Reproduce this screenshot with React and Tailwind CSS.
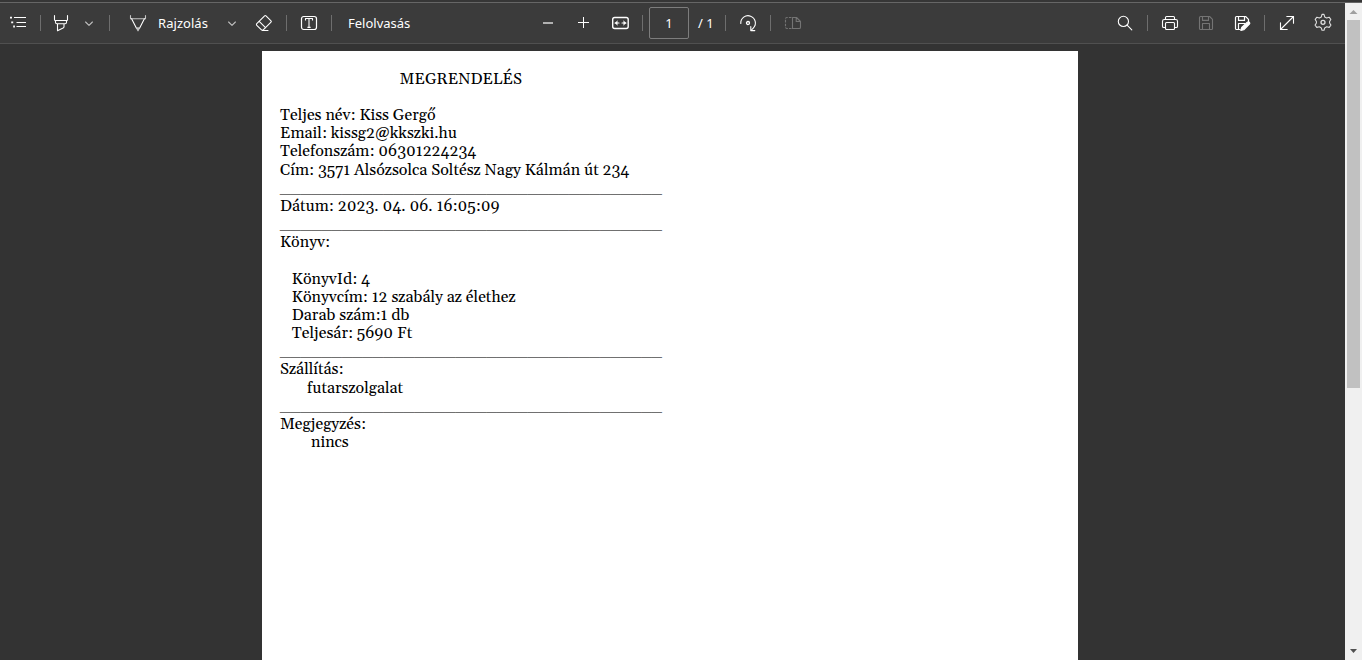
import React from 'react';

function Icon({ className = '', children }) {
  return (
    <svg
      viewBox="0 0 20 20"
      fill="none"
      stroke="currentColor"
      strokeWidth="1.1"
      strokeLinecap="round"
      strokeLinejoin="round"
      className={`h-5 w-5 shrink-0 ${className}`}
    >
      {children}
    </svg>
  );
}

function Divider({ className = '' }) {
  return <div className={`h-4 w-px shrink-0 bg-[#6e6e6e] ${className}`} />;
}

function Chevron({ className = '' }) {
  return (
    <Icon className={className}>
      <path d="M6.6 9L10 12.3 13.4 9" stroke="#c0c0c0" />
    </Icon>
  );
}

function ToolsLeft() {
  return (
    <div className="flex w-[535px] shrink-0 items-center">
      <Icon className="ml-2">
        <path d="M6 4.5h12M8.5 9.5H18M8.5 13.5H18" strokeLinecap="butt" />
        <path d="M2 4.7h2M3.2 9.4h2M5.2 13.5h1.7" strokeWidth="1.8" strokeLinecap="butt" />
      </Icon>
      <Divider className="ml-3" />
      <Icon className="ml-2.5">
        <path d="M3.5 2.5v4.3c0 .4.3.7.7.7h11.6c.4 0 .7-.3.7-.7V2.5" />
        <path d="M4.5 7.5v1.8c0 .8.6 1.4 1.4 1.4h8.2c.8 0 1.4-.6 1.4-1.4V7.5M6.5 10.7v7l5.6-2.6c.6-.3.9-.7.9-1.4v-3" />
      </Icon>
      <Chevron className="ml-2" />
      <Divider className="ml-[10px]" />
      <Icon className="ml-[18px]">
        <path d="M2.5 2.5v3.2h15V2.5" stroke="#c4c4c4" />
        <path d="M3.6 5.8l5 9.6h2.8l5-9.6" />
        <path d="M8.5 15h3l-1.5 2.8z" fill="#c4c4c4" stroke="#c4c4c4" />
      </Icon>
      <span className="ml-[10px] w-[52px] whitespace-nowrap pt-0.5 tracking-[0.05px]">Rajzolás</span>
      <Chevron className="ml-[12px]" />
      <Icon className="ml-[12px]">
        <path d="M2.8 10.6l7.8-7.8a1 1 0 011.4 0l5 5a1 1 0 010 1.4L9.5 16.7a1.6 1.6 0 01-2.3 0l-4.4-4.4a1.2 1.2 0 010-1.7z" />
        <path d="M5.2 8.3l6.3 6.3M8.4 17.5H14" />
      </Icon>
      <Divider className="ml-3" />
      <Icon className="ml-3">
        <rect x="2.5" y="3.5" width="15" height="13" rx="2.2" strokeWidth="1.2" />
        <path d="M6.5 7.4V5.5h7v1.9M10 5.5v8.8M8.4 14.4h3.2" strokeLinecap="butt" />
      </Icon>
      <Divider className="ml-[12px]" />
      <span className="ml-4 whitespace-nowrap pt-0.5">Felolvasás</span>
    </div>
  );
}

function ToolsCenter() {
  return (
    <div className="flex flex-1 items-center">
      <Icon className="ml-[3px]">
        <path d="M5 10h10" stroke="#b0b0b0" strokeWidth="2" strokeLinecap="butt" />
      </Icon>
      <Icon className="ml-[16px]">
        <path d="M4 9.5h11M9.5 4v11" strokeWidth="1" strokeLinecap="butt" />
      </Icon>
      <Icon className="ml-4">
        <rect x="2.7" y="4.5" width="15.5" height="11" rx="2" strokeWidth="1.4" />
        <path d="M5 10h4M12 10h4" />
        <path d="M7.2 7.9L5 10l2.2 2.1zM13.8 7.9L16 10l-2.2 2.1z" fill="currentColor" strokeWidth=".4" />
      </Icon>
      <Divider className="ml-[12px]" />
      <div className="ml-[6px] flex h-8 w-10 shrink-0 items-center justify-center rounded-[2px] border border-[#7d7d7d] pt-0.5">
        1
      </div>
      <span className="ml-[9px] w-[17px] whitespace-nowrap pt-0.5">/ 1</span>
      <Divider className="ml-[10px]" />
      <Icon className="ml-3">
        <path d="M2.8 10.5a7.3 7.3 0 1112.5 4.6l-2 2" />
        <path d="M12.8 13.6v4h4" />
        <circle cx="10" cy="10" r="1.5" strokeWidth="1.3" />
      </Icon>
      <Divider className="ml-3" />
      <Icon className="ml-3 text-[#747474]">
        <path d="M8.5 4.5H3.8a1.3 1.3 0 00-1.3 1.3v8.4c0 .7.6 1.3 1.3 1.3h4.7" strokeDasharray="2.6 1.2" strokeLinecap="butt" />
        <path d="M9.5 4.5h4l4 4v5.7c0 .7-.6 1.3-1.3 1.3H9.5zM13.2 4.5v4h4.3" />
      </Icon>
    </div>
  );
}

function ToolsRight() {
  return (
    <div className="flex w-[230px] shrink-0 items-center">
      <Icon>
        <circle cx="8.4" cy="8.4" r="5.1" />
        <path d="M12.1 12.1l4.7 4.7" />
      </Icon>
      <Divider className="ml-[12px]" />
      <Icon className="ml-3">
        <path d="M5.5 6V4.6c0-.7.5-1.1 1.1-1.1h6.8c.6 0 1.1.4 1.1 1.1V6" />
        <path d="M5.5 14.5H3.8c-.8 0-1.3-.6-1.3-1.3V8.3c0-1 .8-1.8 1.8-1.8h11.4c1 0 1.8.8 1.8 1.8v4.9c0 .7-.5 1.3-1.3 1.3h-1.7" />
        <rect x="5.5" y="9.5" width="9" height="7" rx="1" />
      </Icon>
      <Icon className="ml-4 text-[#747474]">
        <path d="M4.6 3.5h9l2.9 2.9v9c0 .6-.5 1.1-1.1 1.1H4.6c-.6 0-1.1-.5-1.1-1.1V4.6c0-.6.5-1.1 1.1-1.1z" />
        <path d="M6.5 3.5v3.9h6V3.5M6.5 16.5v-6h7v6" />
      </Icon>
      <Icon className="ml-4">
        <path d="M8 16.5H4.6c-.6 0-1.1-.5-1.1-1.1V4.6c0-.6.5-1.1 1.1-1.1h9l2.9 2.9v2.1" strokeWidth="1.2" />
        <path d="M6.5 3.5v3.9h6V3.5M6.5 16.3v-5.8h6.3" strokeWidth="1.2" />
        <path d="M8.8 17.5l.9-3 5.6-5.3a1.3 1.3 0 012.1 2l-5.6 5.6z" fill="currentColor" />
      </Icon>
      <Divider className="ml-[12px]" />
      <Icon className="ml-[12px]">
        <path d="M3.5 16.5l13-13M9.8 3.5h6.7v6.7M3.5 9.8v6.7h6.7" />
      </Icon>
      <Icon className="ml-4 text-[#dedede]">
        <path d="M8.3 3.9L9 1.4h2l.7 2.5 1.9 1.1 2.5-.8 1.7 2.2-1.2 2.2v1.4l1.3 2.1-1.7 2.3-2.6-.6-1.9 1.1-.7 2.4H9l-.7-2.4-1.9-1.1-2.6.6-1.7-2.3L3.4 10V8.6L2.2 6.4l1.7-2.2 2.5.8z" />
        <circle cx="10" cy="9.3" r="2" strokeWidth="1.3" />
      </Icon>
    </div>
  );
}

const rule = '_'.repeat(37);
const ruleStyle = 'text-[#707070] tracking-[0.03px]';

const lines = [
  { text: 'MEGRENDELÉS', style: 'pl-[119.6px]' },
  { text: '' },
  { text: 'Teljes név: Kiss Gergő' },
  { text: 'Email: kissg2@kkszki.hu' },
  { text: 'Telefonszám: 06301224234' },
  { text: 'Cím: 3571 Alsózsolca Soltész Nagy Kálmán út 234' },
  { text: rule, style: ruleStyle },
  { text: 'Dátum: 2023. 04. 06. 16:05:09' },
  { text: rule, style: ruleStyle },
  { text: 'Könyv:' },
  { text: '' },
  { text: 'KönyvId: 4', style: 'pl-[11.8px]' },
  { text: 'Könyvcím: 12 szabály az élethez', style: 'pl-[11.8px]' },
  { text: 'Darab szám:1 db', style: 'pl-[11.8px]' },
  { text: 'Teljesár: 5690 Ft', style: 'pl-[11.8px]' },
  { text: rule, style: ruleStyle },
  { text: 'Szállítás:' },
  { text: 'futarszolgalat', style: 'pl-[27px]' },
  { text: rule, style: ruleStyle },
  { text: 'Megjegyzés:' },
  { text: 'nincs', style: 'pl-[31px]' },
];

function Page() {
  return (
    <div className="w-[816px] bg-white px-[18px] pt-[18.7px] font-['Gelasio','Liberation_Serif',serif] text-base leading-[18.18px] text-black">
      {lines.map((line, i) => (
        <div key={i} className={`h-[18.18px] whitespace-pre ${line.style || ''}`}>
          {line.text}
        </div>
      ))}
    </div>
  );
}

function Scrollbar() {
  return (
    <div className="flex w-[17px] shrink-0 flex-col items-center bg-[#f0f0f0]">
      <svg viewBox="0 0 17 17" className="h-[17px] w-[17px] shrink-0">
        <path d="M4.5 11h8l-4-4z" fill="#a0a0a0" />
      </svg>
      <div className="h-[368px] w-[13px] bg-[#c1c1c1]" />
      <svg viewBox="0 0 17 17" className="mt-auto h-[17px] w-[17px] shrink-0">
        <path d="M5 6h7l-3.5 4z" fill="#505050" />
      </svg>
    </div>
  );
}

export default function App() {
  return (
    <div className="flex h-[660px] w-[1362px] flex-col overflow-hidden bg-[#333333]">
      <div className="h-[3px] shrink-0 border-b border-[#666666] bg-[#363636]" />
      <div className="flex min-h-0 flex-1">
        <div className="flex min-w-0 flex-1 flex-col">
          <div className="flex h-[41px] shrink-0 items-center border-b border-[#505050] bg-[#3b3b3b] font-['Noto_Sans','Open_Sans',sans-serif] text-[13px] text-white">
            <ToolsLeft />
            <ToolsCenter />
            <ToolsRight />
          </div>
          <div className="flex min-h-0 flex-1 justify-center overflow-hidden pt-[7px] pr-[5px]">
            <Page />
          </div>
        </div>
        <Scrollbar />
      </div>
    </div>
  );
}
